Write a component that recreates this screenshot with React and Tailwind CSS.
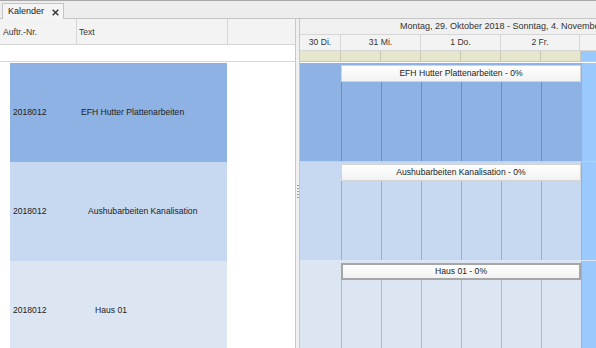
const rows = [
  { nr: '2018012', text: 'EFH Hutter Plattenarbeiten', pad: '', bg: 'bg-[#8eb2e3]', bar: 'EFH Hutter Plattenarbeiten - 0%', barBorder: 'border border-[#d4d4d4]' },
  { nr: '2018012', text: 'Aushubarbeiten Kanalisation', pad: 'pl-[7px]', bg: 'bg-[#c6d9f1]', bar: 'Aushubarbeiten Kanalisation - 0%', barBorder: 'border border-[#d4d4d4]' },
  { nr: '2018012', text: 'Haus 01', pad: 'pl-[14px]', bg: 'bg-[#dce6f2]', bar: 'Haus 01 - 0%', barBorder: 'border-2 border-[#a6a6a6]' },
]

const days = [
  { label: '30 Di.', w: 'w-[41px]' },
  { label: '31 Mi.', w: 'w-[80px]' },
  { label: '1 Do.', w: 'w-[80px]' },
  { label: '2 Fr.', w: 'w-[79px]' },
]

export default function App() {
  return (
    <div
      className="w-[596px] h-[348px] overflow-hidden bg-white text-[#222] flex flex-col"
      style={{ fontFamily: '"Liberation Sans", Arial, sans-serif', fontSize: '8.6px' }}
    >
      <TabStrip />
      <div className="flex flex-1 min-h-0">
        <LeftPanel />
        <div className="w-[4px] shrink-0 bg-[#f0f0f0] border-r border-[#c8c8c8] flex flex-col items-center justify-center">
          <div className="flex flex-col gap-[2px] mt-[16px]">
            {[0, 1, 2, 3, 4].map((i) => (
              <div key={i} className="w-[2px] h-[1px] bg-[#9a9a9a]" />
            ))}
          </div>
        </div>
        <RightPanel />
      </div>
    </div>
  )
}

function TabStrip() {
  return (
    <div className="h-[19px] shrink-0 bg-[#ededed] border-t border-[#a8a8a8] border-b border-b-[#c4c4c4] flex items-end pl-[2px]">
      <div className="h-[16px] w-[62px] bg-[#f4f4f4] border border-b-0 border-[#c4c4c4] flex items-center justify-between pl-[5px] pr-[4px] -mb-px">
        <span className="text-[9px] text-[#222]">Kalender</span>
        <svg width="7" height="7" viewBox="0 0 7 7" className="mt-px">
          <path d="M0.7 0.7 L6.3 6.3 M6.3 0.7 L0.7 6.3" stroke="#333" strokeWidth="1.4" />
        </svg>
      </div>
    </div>
  )
}

function LeftPanel() {
  return (
    <div className="w-[296px] shrink-0 flex flex-col border-r border-[#c8c8c8]">
      <div className="h-[26px] shrink-0 flex bg-[#f3f3f3] border-b border-[#d6d6d6] text-[#333]">
        <div className="w-[77px] border-r border-[#d6d6d6] flex items-center pl-[3px] pt-[2px]">Auftr.-Nr.</div>
        <div className="w-[151px] border-r border-[#d6d6d6] flex items-center pl-[2px] pt-[2px]">Text</div>
        <div className="flex-1" />
      </div>
      <div className="h-[17px] shrink-0 border-b border-[#d6d6d6] bg-white" />
      <div className="pl-[10px] pt-px flex flex-col">
        {rows.map((r, i) => (
          <div key={i} className={`w-[217px] h-[99px] shrink-0 flex items-center ${r.bg}`}>
            <span className="w-[71px] pl-[3px]">{r.nr}</span>
            <span className={r.pad}>{r.text}</span>
          </div>
        ))}
      </div>
    </div>
  )
}

function RightPanel() {
  return (
    <div className="flex-1 flex flex-col min-w-0 overflow-hidden">
      <div className="h-[16px] shrink-0 bg-[#f0f0f0] border-b border-[#d6d6d6] flex items-center pl-[100px] whitespace-nowrap text-[#333] text-[9px]">
        Montag, 29. Oktober 2018 - Sonntag, 4. November
      </div>
      <div className="h-[16px] shrink-0 bg-[#f3f3f3] border-b border-[#d6d6d6] flex text-[#333]">
        {days.map((d) => (
          <div key={d.label} className={`${d.w} shrink-0 border-r border-[#d6d6d6] flex items-center justify-center`}>
            {d.label}
          </div>
        ))}
        <div className="flex-1" />
      </div>
      <div className="h-[11px] shrink-0 flex border-b border-[#c9c9b4]">
        <div className="w-[41px] shrink-0 bg-[#e6e6cc] border-r border-[#c9c9b4]" />
        {[0, 1, 2, 3, 4, 5].map((i) => (
          <div key={i} className="w-[40px] shrink-0 bg-[#e6e6cc] border-r border-[#c9c9b4]" />
        ))}
        <div className="flex-1 bg-[#99c9fd]" />
      </div>
      <div className="flex flex-col pt-px">
        {rows.map((r, i) => (
          <div key={i} className={`h-[99px] shrink-0 flex border-b border-white/40 ${r.bg}`}>
            <div className="w-[41px] shrink-0" />
            <div className="w-[240px] shrink-0 flex flex-col pt-[2px]">
              <div className={`h-[17px] shrink-0 bg-gradient-to-b from-white to-[#f2f2f2] ${r.barBorder} flex items-center justify-center whitespace-nowrap`}>
                {r.bar}
              </div>
              <div className="flex flex-1">
                {[0, 1, 2, 3, 4, 5].map((k) => (
                  <div key={k} className="w-[40px] shrink-0 border-l border-black/20" />
                ))}
              </div>
            </div>
            <div className="flex-1 bg-[#99c9fd] border-l border-black/10" />
          </div>
        ))}
      </div>
    </div>
  )
}
